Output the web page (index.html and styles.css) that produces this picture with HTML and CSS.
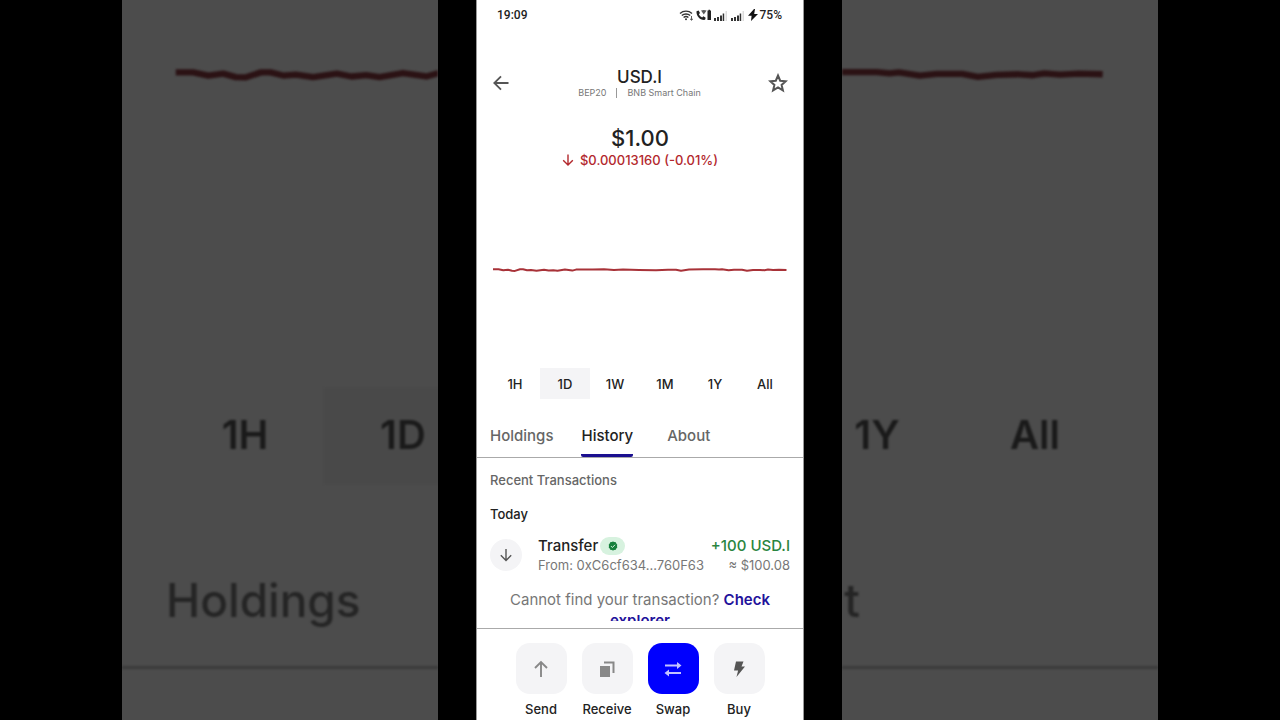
FILE: index.html
```
<!DOCTYPE html>
<html lang="en">
<head>
  <meta charset="UTF-8">
  <meta name="viewport" content="width=device-width, initial-scale=1">
  <title>USD.I</title>
  <link rel="stylesheet" href="styles.css">
</head>
<body>

  <div class="backdrop left" aria-hidden="true">
    <svg class="big-chart" viewBox="0 0 100 20">
      <use href="#price-line" />
    </svg>
    <div class="big-periods">
      <span>1H</span>
      <span class="active">1D</span>
    </div>
    <div class="big-tabs">Holdings</div>
  </div>

  <main class="phone">
    <div class="status">
      <span>19:09</span>
      <div class="status-icons">
        <svg width="15" height="12" viewBox="0 0 15 12" fill="none" stroke="#333" stroke-width="1.4">
          <path d="M1 4.4a9 9 0 0 1 12 0M2.8 6.6a6.2 6.2 0 0 1 8.4 0M4.6 8.6a3.6 3.6 0 0 1 4.8 0" />
          <circle cx="7" cy="10.3" r="1" fill="#333" stroke="none" />
          <path d="M12.5 7v4M11 9.8l1.5 1.4L14 9.8" stroke-width=".8" />
        </svg>
        <svg width="16" height="12" viewBox="0 0 16 12" fill="#222">
          <path d="M.5 2.2 2.6 1.6 4 4 2.9 5.2c.7 1.5 1.7 2.5 3.2 3.2l1.3-1.1 2.3 1.5-.6 2C4.2 11.5.1 7.2.5 2.2z" />
          <path d="M5 1.6c1.700-.9 3.900-.9 5.600 0L7.800 5.600z" opacity=".75" />
          <path d="M11.500 1.600h1V.7h1.500v.9h1V11h-3.500z" />
        </svg>
        <svg class="bars" width="13" height="11" viewBox="0 0 13 11" fill="#333">
          <path d="M0 8h2v3H0zM3 7h2v4H3zM6 5.500h2V11H6zM8.700 3.500h1.500V11H8.700z" />
          <path d="M11.500 1H13v10h-1.500z" fill="#ddd" />
        </svg>
        <svg class="bars" width="13" height="11" viewBox="0 0 13 11" fill="#333">
          <path d="M0 8h2v3H0zM3 7h2v4H3zM6 5.500h2V11H6zM8.700 3.500h1.500V11H8.700z" />
          <path d="M11.500 1H13v10h-1.500z" fill="#ddd" />
        </svg>
        <svg width="10" height="12" viewBox="0 0 10 12" fill="#111">
          <path d="M6 0 0 6.800h3.600L3 12l7-7H6.200L7 0z" />
        </svg>
        <span>75%</span>
      </div>
    </div>

    <header class="header">
      <button class="icon-btn" aria-label="Back">
        <svg width="16" height="16" viewBox="0 0 16 16" fill="none" stroke="#555" stroke-width="1.800">
          <path d="M15.500 8H1.500M8 1.300 1.300 8 8 14.700" />
        </svg>
      </button>
      <div class="token">
        <h1>USD.I</h1>
        <p><span>BEP20</span><i></i><span>BNB Smart Chain</span></p>
      </div>
      <button class="icon-btn" aria-label="Add to favourites">
        <svg width="20" height="20" viewBox="0 0 20 20" fill="none" stroke="#555" stroke-width="2">
          <path d="m10 2.500 2.200 5.200 5.600.5-4.200 3.700 1.300 5.500-4.900-3-4.900 3 1.300-5.500-4.200-3.700 5.600-.5z" />
        </svg>
      </button>
    </header>

    <section class="price">
      <strong>$1.00</strong>
      <p>
        <svg width="12" height="12" viewBox="0 0 12 12" fill="none" stroke="#b3282d" stroke-width="1.400">
          <path d="M6 .5v10.500M1.200 6.200 6 11l4.800-4.800" />
        </svg>
        $0.00013160 (-0.01%)
      </p>
    </section>

    <svg class="chart" viewBox="0 0 328 20" role="img" aria-label="Price over one day">
      <path id="price-line" d="M17 9.300H22.500L27.300 10.300 32 9.700 36 10.800 39 10.900 44 9.300 47 9.300 51 10.300 55 10 60.500 10.800 68 9.700 72.600 10.600 77.300 10.200 81.500 10.800 88.900 9.500 96.300 10.600 100 9.600H117L128 9.200 138 9.900 147 9.500 163 9.900 180 10.300 192 9.800H200L205 10.800 213 9.600 227 9.200H239L243 9.600 246 9.300 252.600 10.300 258 9.800H266L271 10.700 277 10.100 284 9.900 288.500 10.200 292 9.600 297 10 303 9.700 310.500 9.900" />
    </svg>

    <div class="periods">
      <button>1H</button>
      <button class="active">1D</button>
      <button>1W</button>
      <button>1M</button>
      <button>1Y</button>
      <button>All</button>
    </div>

    <nav class="tabs">
      <a href="#holdings">Holdings</a>
      <a href="#history" class="active">History</a>
      <a href="#about">About</a>
    </nav>

    <section class="history" id="history">
      <h2>Recent Transactions</h2>
      <h3>Today</h3>

      <div class="tx">
        <div class="tx-icon">
          <svg width="14" height="14" viewBox="0 0 14 14" fill="none" stroke="#555" stroke-width="1.400">
            <path d="M7 1v11.500M1.800 7.300 7 12.500l5.200-5.200" />
          </svg>
        </div>
        <div class="tx-info">
          <div class="tx-name">
            Transfer
            <span class="badge">
              <svg width="10" height="10" viewBox="0 0 10 10">
                <path fill="#16803c" d="m5 .4 1.300.7 1.500.1.500 1.400 1 1.100L9 5l.3 1.400-1 1-.5 1.400-1.500.1L5 9.600l-1.300-.7-1.500-.1-.5-1.400-1-1L1 5 .7 3.700l1-1.100.5-1.400 1.500-.1z" />
                <path fill="none" stroke="#d7f2df" d="m3 5.100 1.400 1.400L7 3.800" />
              </svg>
            </span>
          </div>
          <p>From: 0xC6cf634...760F63</p>
        </div>
        <div class="tx-amount">
          <strong>+100 USD.I</strong>
          <p>≈ $100.08</p>
        </div>
      </div>

      <p class="notice">Cannot find your transaction? <a href="#explorer">Check explorer</a></p>
    </section>

    <footer class="actions">
      <button>
        <span class="tile">
          <svg width="16" height="18" viewBox="0 0 16 18" fill="none" stroke="#888" stroke-width="1.900">
            <path d="M8 17V2M2 8l6-6 6 6" />
          </svg>
        </span>
        Send
      </button>
      <button>
        <span class="tile">
          <svg width="16" height="18" viewBox="0 0 16 18" fill="#888">
            <path d="M1 6h10v11H1zM5 1.500h10.500V13H13.500V3.500H5z" />
          </svg>
        </span>
        Receive
      </button>
      <button>
        <span class="tile primary">
          <svg width="18" height="18" viewBox="0 0 18 18" fill="none" stroke="#c3c3ff" stroke-width="1.800">
            <path d="M1 5.500h14M3 13h14" />
            <path d="m13 2 4.500 3.500L13 9zM5 9.500.5 13 5 16.500z" fill="#c3c3ff" stroke="none" />
          </svg>
        </span>
        Swap
      </button>
      <button>
        <span class="tile">
          <svg width="14" height="18" viewBox="0 0 14 18" fill="#555">
            <path d="M4 1.500h7.500L9.500 6.500H13L4.500 17l1.600-6.500H2z" />
          </svg>
        </span>
        Buy
      </button>
    </footer>
  </main>

  <div class="backdrop right" aria-hidden="true">
    <svg class="big-chart" viewBox="228 0 100 20">
      <use href="#price-line" />
    </svg>
    <div class="big-periods">
      <span>1Y</span>
      <span>All</span>
    </div>
    <div class="big-tabs"><span>About</span></div>
  </div>

</body>
</html>
```
FILE: styles.css
```
* {
  box-sizing: border-box;
}

body {
  margin: 0;
  height: 100vh;
  display: grid;
  grid-template-columns: 1fr 328px 1fr;
  column-gap: 38px;
  padding: 0 122px;
  background: #000;
  color: #222;
  font-family: Inter, "Liberation Sans", sans-serif;
  overflow: hidden;
}

h1, h2, h3, p {
  margin: 0;
}

button {
  padding: 0;
  border: none;
  background: none;
  color: inherit;
  font-family: inherit;
  cursor: pointer;
}

a {
  color: inherit;
  text-decoration: none;
}

svg {
  display: block;
  flex: none;
}

/* enlarged, dimmed copy of the screen behind the phone */
.backdrop {
  height: 100vh;
  padding-top: 43px;
  overflow: hidden;
  background: #4c4c4c;
  color: #1a1a1a;
}

.big-chart {
  width: 100%;
  fill: none;
  stroke: #2b1214;
  stroke-width: 2;
  stroke-linejoin: round;
  filter: blur(1px);
}

.big-periods {
  display: flex;
  height: 96px;
  margin-top: 282px;
  padding: 0 44px;
  font-size: 40px;
  font-weight: 600;
}

.big-periods span {
  flex: none;
  width: 158px;
  line-height: 94px;
  text-align: center;
  filter: blur(1px);
}

.big-periods .active {
  background: #494949;
}

.right .big-periods {
  justify-content: flex-end;
}

.big-tabs {
  height: 185px;
  padding: 88px 44px 0;
  border-bottom: 3px solid #3b3b3b;
  color: #252525;
  font-size: 46px;
  font-weight: 500;
  line-height: 56px;
  filter: blur(1px);
}

.right .big-tabs {
  padding-left: 0;
}

.right .big-tabs span {
  display: flex;
  justify-content: flex-end;
  width: 18px;
  overflow: hidden;
}

.phone {
  display: flex;
  flex-direction: column;
  height: 100vh;
  background: #fff;
  border-left: 1px solid #999;
  border-right: 1px solid #999;
}

.status {
  display: flex;
  justify-content: space-between;
  align-items: center;
  height: 30px;
  padding: 0 21px 0 20px;
  font-family: Roboto, sans-serif;
  font-size: 12px;
  font-weight: 500;
}

.status-icons {
  display: flex;
  align-items: center;
  gap: 2px;
}

.bars {
  margin-right: 2px;
}

.header {
  display: flex;
  justify-content: space-between;
  align-items: center;
  margin-top: 37px;
  padding: 0 15px 0 14px;
}

.icon-btn {
  display: flex;
  width: 20px;
  justify-content: center;
}

.token {
  text-align: center;
}

.token h1 {
  font-size: 17px;
  font-weight: 500;
  line-height: 20px;
}

.token p {
  display: flex;
  align-items: center;
  color: #777;
  font-size: 9px;
  line-height: 12px;
}

.token i {
  width: 1px;
  height: 10px;
  margin: 0 10px;
  background: #999;
}

.price {
  margin-top: 26px;
  text-align: center;
}

.price strong {
  display: block;
  font-size: 22px;
  font-weight: 500;
  line-height: 27px;
}

.price p {
  display: flex;
  justify-content: center;
  align-items: center;
  gap: 6px;
  color: #b3282d;
  font-size: 13px;
  font-weight: 500;
  line-height: 16px;
}

.chart {
  margin: 92px -1px 0;
  fill: none;
  stroke: #a83238;
  stroke-width: 2;
  stroke-linejoin: round;
}

.periods {
  display: flex;
  margin-top: 88px;
  padding: 0 13px;
}

.periods button {
  flex: 1;
  height: 31px;
  font-size: 13px;
  font-weight: 500;
}

.periods .active {
  background: #f4f4f6;
}

.tabs {
  display: flex;
  gap: 28px;
  margin-top: 22px;
  padding: 0 13px;
  border-bottom: 1px solid #aaa;
  color: #666;
  font-size: 15px;
  font-weight: 500;
}

.tabs a {
  height: 36px;
  line-height: 30px;
}

.tabs a:last-child {
  margin-left: 6px;
}

.tabs .active {
  color: #222;
  border-bottom: 3px solid #1a0f8f;
  border-radius: 2px;
}

.history {
  height: 163px;
  padding: 12px 13px 0;
  overflow: hidden;
}

.history h2 {
  color: #666;
  font-size: 13px;
  font-weight: 500;
  line-height: 20px;
}

.history h3 {
  margin-top: 14px;
  font-size: 13px;
  font-weight: 500;
  line-height: 20px;
}

.tx {
  display: flex;
  align-items: center;
  margin-top: 12px;
}

.tx-icon {
  display: flex;
  justify-content: center;
  align-items: center;
  width: 32px;
  height: 32px;
  margin-right: 16px;
  border-radius: 50%;
  background: #f4f4f6;
}

.tx-name {
  display: flex;
  align-items: center;
  gap: 2px;
  font-size: 15px;
  font-weight: 500;
  line-height: 20px;
}

.badge {
  display: flex;
  justify-content: center;
  align-items: center;
  width: 25px;
  height: 18px;
  border-radius: 9px;
  background: #d7f2df;
}

.tx p {
  color: #777;
  font-size: 13px;
  line-height: 18px;
}

.tx-amount {
  margin-left: auto;
  text-align: right;
}

.tx-amount strong {
  display: block;
  color: #2a8540;
  font-size: 15px;
  font-weight: 500;
  line-height: 20px;
}

.notice {
  margin-top: 15px;
  color: #777;
  font-size: 15px;
  line-height: 21px;
  text-align: center;
}

.notice a {
  color: #1f129b;
  font-weight: 600;
}

.actions {
  display: flex;
  justify-content: center;
  gap: 15px;
  margin-top: 7px;
  padding-top: 14px;
  border-top: 1px solid #aaa;
}

.actions button {
  display: flex;
  flex-direction: column;
  align-items: center;
  gap: 6px;
  width: 51px;
  font-size: 13px;
  font-weight: 500;
  line-height: 18px;
}

.tile {
  display: flex;
  justify-content: center;
  align-items: center;
  width: 51px;
  height: 51px;
  border-radius: 14px;
  background: #f4f4f6;
}

.primary {
  background: #0000fe;
}
```
